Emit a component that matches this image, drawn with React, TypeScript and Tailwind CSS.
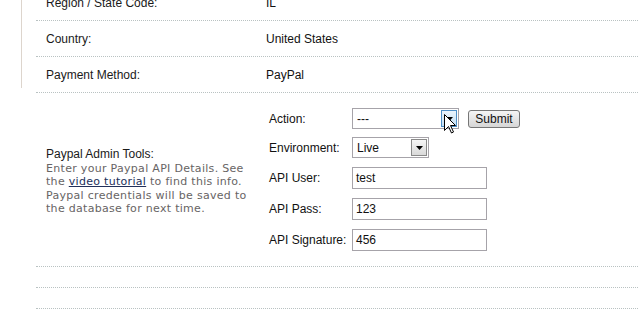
const arial = "font-['Liberation_Sans',Arial,sans-serif]";

function InfoRow({ label, value, className = "" }: { label: string; value: string; className?: string }) {
  return (
    <div className={`flex h-[36px] items-center border-b border-dotted border-[#b9c2c2] ${className}`}>
      <div className="w-[230px] pl-[10px] text-[12px] text-[#1a1a1a]">{label}</div>
      <div className="text-[12px] text-[#111]">{value}</div>
    </div>
  );
}

function DropArrow({ hover }: { hover?: boolean }) {
  return (
    <div
      className={`flex h-[17px] w-[16px] items-center justify-center border ${
        hover
          ? "border-[#4f8fc6] bg-linear-to-b from-[#eaf4fc] to-[#c4dff4]"
          : "border-[#8a8a8a] bg-linear-to-b from-[#f6f6f6] to-[#d9d9d9]"
      }`}
    >
      <svg width="7" height="4" viewBox="0 0 7 4">
        <path d="M0 0h7L3.5 4z" fill="#000" />
      </svg>
    </div>
  );
}

function FakeSelect({ value, width, hover }: { value: string; width: string; hover?: boolean }) {
  return (
    <div className={`relative flex h-[21px] ${width} items-center justify-between border border-[#a6a3a9] bg-white pl-[4px] pr-[1px]`}>
      <span className="text-[12px] text-[#111]">{value}</span>
      <DropArrow hover={hover} />
      {hover && (
        <svg
          className="absolute left-[91px] top-[5px]"
          width="13"
          height="20"
          viewBox="0 0 13 20"
        >
          <path
            d="M0.5 0.5V16.5L4.5 12.5L7.5 19L9.5 18L6.5 11.5H11.5Z"
            fill="#fff"
            stroke="#000"
            strokeWidth="1"
            strokeLinejoin="miter"
          />
        </svg>
      )}
    </div>
  );
}

function FormRow({ label, h, children }: { label: string; h: string; children: React.ReactNode }) {
  return (
    <div className={`flex ${h} items-center`}>
      <div className="w-[86px] pl-[3px] text-[12px] text-[#111]">{label}</div>
      {children}
    </div>
  );
}

function TextBox({ value }: { value: string }) {
  return (
    <div className="flex h-[22px] w-[135px] items-center border border-[#a6a3a9] bg-white pl-[3px] text-[12px] text-[#111]">
      {value}
    </div>
  );
}

export default function App() {
  return (
    <div className={`flex h-[328px] w-[638px] overflow-hidden bg-white ${arial}`}>
      <div className="w-[22px] shrink-0">
        <div className="h-[88px] border-r border-[#ddd5cd]" />
      </div>

      <div className="-mt-[15px] flex-1 pl-[14px]">
        <InfoRow label="Region / State Code:" value="IL" />
        <InfoRow label="Country:" value="United States" />
        <InfoRow label="Payment Method:" value="PayPal" />

        <div className="flex h-[174px] items-center border-b border-dotted border-[#b9c2c2]">
          <div className="w-[230px] pl-[10px] pt-[3px]">
            <div className="text-[12px] leading-[15px] text-[#1a1a1a]">Paypal Admin Tools:</div>
            <div className="font-['DejaVu_Sans',Verdana,sans-serif] text-[11px] leading-[13.4px] tracking-[0.3px] text-[#676464]">
              Enter your Paypal API Details. See
              <br />
              the{" "}
              <a href="#" className="text-[#22305a] underline">
                video tutorial
              </a>{" "}
              to find this info.
              <br />
              Paypal credentials will be saved to
              <br />
              the database for next time.
            </div>
          </div>

          <div className="flex flex-col">
            <FormRow label="Action:" h="h-[29px]">
              <FakeSelect value="---" width="w-[107px]" hover />
              <button className="ml-[9px] flex h-[18px] w-[52px] items-center justify-center rounded-[3px] border border-[#767676] bg-linear-to-b from-[#f5f5f5] to-[#d6d6d6] text-[12px] text-[#111]">
                Submit
              </button>
            </FormRow>
            <FormRow label="Environment:" h="h-[29px]">
              <FakeSelect value="Live" width="w-[77px]" />
            </FormRow>
            <FormRow label="API User:" h="h-[31px]">
              <TextBox value="test" />
            </FormRow>
            <FormRow label="API Pass:" h="h-[31px]">
              <TextBox value="123" />
            </FormRow>
            <FormRow label="API Signature:" h="h-[31px]">
              <TextBox value="456" />
            </FormRow>
          </div>
        </div>

        <div className="h-[21px] border-b border-dotted border-[#b9c2c2]" />
        <div className="h-[21px] border-b border-dotted border-[#b9c2c2]" />
      </div>
    </div>
  );
}
